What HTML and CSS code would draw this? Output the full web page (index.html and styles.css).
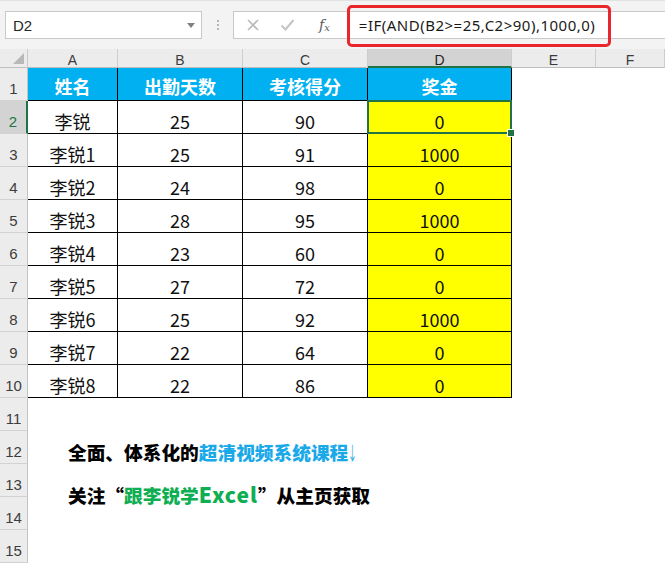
FILE: index.html
```html
<!DOCTYPE html>
<html>
<head>
<meta charset="utf-8">
<link rel="stylesheet" href="styles.css">
</head>
<body>
<div class="app">
  <div class="toolbar">
    <div class="namebox"><span class="name">D2</span><span class="caret"></span></div>
    <div class="grip"><i></i><i></i><i></i></div>
    <div class="fbar">
      <svg class="ficon" width="14" height="14" viewBox="0 0 14 14"><path d="M2 2L12 12M12 2L2 12" stroke="#b9b9b9" stroke-width="1.6" fill="none"/></svg>
      <svg class="ficon check" width="15" height="14" viewBox="0 0 15 14"><path d="M1.5 7.5L5.5 11.5L13.5 2" stroke="#c4c4c4" stroke-width="2" fill="none"/></svg>
      <span class="fx">f<sub>x</sub></span>
      <div class="formula">=IF(AND(B2&gt;=25,C2&gt;90),1000,0)</div>
    </div>
    <div class="highlight"></div>
  </div>

  <div class="sheet">
    <div class="row colhdr">
      <div class="corner"><span class="tri"></span></div>
      <div class="ch">A</div><div class="ch">B</div><div class="ch">C</div><div class="ch on">D</div><div class="ch">E</div><div class="ch">F</div><div class="ch last"></div>
    </div>

    <div class="row">
      <div class="rh">1</div>
      <div class="c h">姓名</div><div class="c h">出勤天数</div><div class="c h">考核得分</div><div class="c h">奖金</div><div class="e"></div><div class="e"></div><div class="e"></div>
    </div>
    <div class="row">
      <div class="rh on">2</div>
      <div class="c">李锐</div><div class="c">25</div><div class="c">90</div><div class="c y sel">0</div><div class="e"></div><div class="e"></div><div class="e"></div>
    </div>
    <div class="row">
      <div class="rh">3</div>
      <div class="c">李锐1</div><div class="c">25</div><div class="c">91</div><div class="c y">1000</div><div class="e"></div><div class="e"></div><div class="e"></div>
    </div>
    <div class="row">
      <div class="rh">4</div>
      <div class="c">李锐2</div><div class="c">24</div><div class="c">98</div><div class="c y">0</div><div class="e"></div><div class="e"></div><div class="e"></div>
    </div>
    <div class="row">
      <div class="rh">5</div>
      <div class="c">李锐3</div><div class="c">28</div><div class="c">95</div><div class="c y">1000</div><div class="e"></div><div class="e"></div><div class="e"></div>
    </div>
    <div class="row">
      <div class="rh">6</div>
      <div class="c">李锐4</div><div class="c">23</div><div class="c">60</div><div class="c y">0</div><div class="e"></div><div class="e"></div><div class="e"></div>
    </div>
    <div class="row">
      <div class="rh">7</div>
      <div class="c">李锐5</div><div class="c">27</div><div class="c">72</div><div class="c y">0</div><div class="e"></div><div class="e"></div><div class="e"></div>
    </div>
    <div class="row">
      <div class="rh">8</div>
      <div class="c">李锐6</div><div class="c">25</div><div class="c">92</div><div class="c y">1000</div><div class="e"></div><div class="e"></div><div class="e"></div>
    </div>
    <div class="row">
      <div class="rh">9</div>
      <div class="c">李锐7</div><div class="c">22</div><div class="c">64</div><div class="c y">0</div><div class="e"></div><div class="e"></div><div class="e"></div>
    </div>
    <div class="row">
      <div class="rh">10</div>
      <div class="c">李锐8</div><div class="c">22</div><div class="c">86</div><div class="c y">0</div><div class="e"></div><div class="e"></div><div class="e"></div>
    </div>

    <div class="lower">
      <div class="heads">
        <div class="rh">11</div>
        <div class="rh">12</div>
        <div class="rh">13</div>
        <div class="rh">14</div>
        <div class="rh">15</div>
      </div>
      <div class="notes">
        <div class="note">全面、体系化的<span class="blue">超清视频系统课程<span class="arrow">↓</span></span></div>
        <div class="note">关注“<span class="green">跟李锐学<span class="latin">Excel</span></span>”从主页获取</div>
      </div>
    </div>
  </div>
</div>
</body>
</html>
```

FILE: styles.css
```css
* { box-sizing: border-box; }
html, body { margin: 0; padding: 0; background: #fff; }
body { width: 665px; height: 563px; overflow: hidden; font-family: "Noto Sans CJK SC", "Noto Sans", sans-serif; }

.app { width: 665px; }

/* toolbar */
.toolbar {
  position: relative;
  height: 49px;
  background: #f3f3f3;
  border-top: 1px solid #e2e2e2;
  display: flex;
  align-items: center;
  padding-left: 5px;
}
.namebox {
  width: 197px;
  height: 28px;
  background: #fff;
  border: 1px solid #c9c9c9;
  display: flex;
  align-items: center;
  justify-content: space-between;
  padding: 0 6px 0 7px;
}
.name { font-family: "Liberation Sans", sans-serif; font-size: 15px; color: #262626; }
.caret {
  width: 0; height: 0;
  border-left: 4px solid transparent;
  border-right: 4px solid transparent;
  border-top: 5px solid #808080;
}
.grip {
  width: 31px;
  display: flex;
  flex-direction: column;
  align-items: center;
  gap: 2px;
}
.grip i { display: block; width: 2px; height: 2px; background: #b5b5b5; }
.fbar {
  flex: 1;
  height: 28px;
  background: #fff;
  border: 1px solid #c9c9c9;
  border-right: none;
  display: flex;
  align-items: center;
  padding-left: 12px;
}
.ficon { flex: none; }
.check { margin-left: 20px; }
.fx {
  margin-left: 24px;
  font-family: "DejaVu Serif", "Liberation Serif", serif;
  font-style: italic;
  font-size: 14px;
  color: #5a5a5a;
  line-height: 1;
}
.fx sub { font-size: 10px; vertical-align: -1px; }
.formula {
  margin-left: 29px;
  font-family: "Noto Sans", "Liberation Sans", sans-serif;
  font-size: 15px;
  color: #1a1a1a;
  white-space: nowrap;
  letter-spacing: 0.5px;
}
.highlight {
  position: absolute;
  left: 347px;
  top: 4px;
  width: 264px;
  height: 42px;
  border: 3px solid #e8262b;
  border-radius: 5px;
  pointer-events: none;
}

/* sheet */
.row {
  display: grid;
  grid-template-columns: 28px 90px 125px 125px 144px 84px 69px;
  grid-template-rows: 33px;
  height: 33px;
}
.row.colhdr { height: 19px; grid-template-rows: 19px; }

.corner {
  background: #ececec;
  border-right: 1px solid #c9c9c9;
  border-bottom: 1px solid #c0c0c0;
  position: relative;
}
.tri {
  position: absolute;
  right: 3px;
  bottom: 3px;
  width: 0; height: 0;
  border-left: 11px solid transparent;
  border-bottom: 11px solid #b8b8b8;
}
.ch {
  background: #ececec;
  border-right: 1px solid #cdcdcd;
  border-bottom: 1px solid #bdbdbd;
  font-family: "Liberation Sans", sans-serif;
  font-size: 14px;
  color: #3c3c3c;
  display: flex;
  align-items: flex-start;
  justify-content: center;
  padding-top: 4px;
  line-height: 15px;
  overflow: hidden;
}
.ch.on { background: #d3d3d3; border-bottom: 2px solid #217346; color: #262626; }
.ch.last { border-right: none; }

.rh {
  height: 33px;
  background: #ececec;
  border-right: 1px solid #c4c4c4;
  border-bottom: 1px solid #d2d2d2;
  font-family: "Liberation Sans", sans-serif;
  font-size: 15px;
  line-height: 18px;
  color: #3c3c3c;
  display: flex;
  align-items: center;
  justify-content: center;
  padding-top: 9px;
  overflow: hidden;
}
.rh.on { background: #d3d3d3; border-right: 2px solid #217346; color: #217346; }

.c {
  border-right: 1px solid #000;
  border-bottom: 1px solid #000;
  display: flex;
  align-items: center;
  justify-content: center;
  font-size: 18px;
  line-height: 22px;
  color: #111;
  padding-top: 7px;
  overflow: visible;
}
.c.h {
  background: #00b0f0;
  color: #fff;
  font-weight: 700;
  padding-top: 3px;
}
.c.y { background: #ffff00; }
.sel { position: relative; }
.sel::before {
  content: "";
  position: absolute;
  left: -1px; top: -1px; right: -1px; bottom: -1px;
  border: 2px solid #217346;
}
.sel::after {
  content: "";
  position: absolute;
  right: -4px;
  bottom: -4px;
  width: 6px;
  height: 6px;
  background: #217346;
  border: 1px solid #fff;
  z-index: 2;
}
.e { background: #fff; }

/* lower rows with the note text */
.lower {
  display: grid;
  grid-template-columns: 28px 1fr;
}
.heads { display: flex; flex-direction: column; }
.notes {
  padding-top: 32px;
  padding-left: 40px;
}
.note {
  font-size: 18.7px;
  line-height: 43px;
  font-weight: 900;
  color: #000;
  white-space: nowrap;
}
.blue { color: #1aa9e8; }
.green { color: #0fae52; }
.latin { font-size: 21px; letter-spacing: 1px; }
.arrow {
  display: inline-block;
  width: 9px;
  transform: scaleX(0.5);
  transform-origin: 50% 50%;
  text-indent: -5px;
  font-weight: 400;
}
```
